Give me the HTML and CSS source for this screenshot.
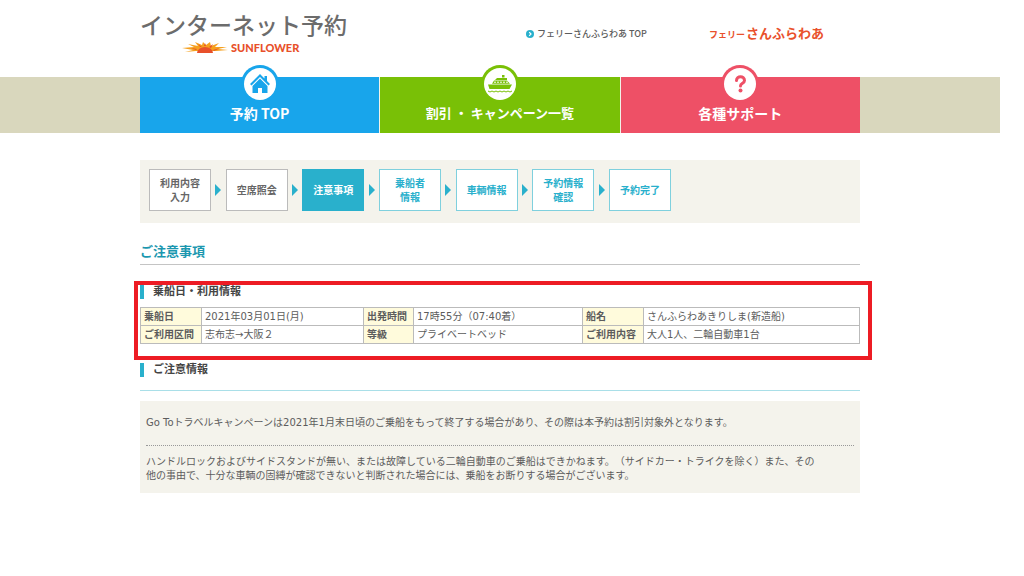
FILE: index.html
```html
<!DOCTYPE html>
<html lang="ja">
<head>
<meta charset="utf-8">
<meta name="viewport" content="width=device-width, initial-scale=1">
<title>インターネット予約</title>
<link rel="stylesheet" href="styles.css">
</head>
<body>
<header class="header container">
  <div class="brand">
    <h1 class="brand-title">インターネット予約</h1>
    <div class="brand-sub">
      <svg class="sun" viewBox="0 0 46 12" aria-hidden="true">
        <path fill="#f5a01e" d="M0 6l12-1-6-3 10 2-3-4 7 3 1-3 3 3 4-3 1 4 8-3-4 4 12 0-9 2 10 1-12 1H14L3 10l8-2z"/>
        <path fill="#e8502a" d="M15 11a8 6 0 0 1 16 0zM14 8l-5-2 6 1zM18 5l-2-3 4 3zM22 4l1-3 1 3zM27 5l4-3-2 4zM31 8l7-2-6 3z"/>
      </svg>
      <span>SUNFLOWER</span>
    </div>
  </div>
  <a class="top-link" href="#">
    <svg class="bullet" viewBox="0 0 8 8" aria-hidden="true"><circle cx="4" cy="4" r="4" fill="#29b0cc"/><path d="M3.2 2.2L5 4 3.2 5.8" fill="none" stroke="#fff" stroke-width="1.2"/></svg>
    <span>フェリーさんふらわあ TOP</span>
  </a>
  <a class="company" href="#"><span>フェリー</span><span class="company-name">さんふらわあ</span></a>
</header>

<div class="nav-band">
  <nav class="nav container">
    <a class="nav-item blue" href="#">
      <span class="nav-icon"><svg viewBox="0 0 32 32" aria-hidden="true"><path fill="#18a5eb" d="M16 6l4.500 4.500V8H23v5l3 3-1.500 1.500L16 9l-8.500 8.500L6 16z"/><path fill="#18a5eb" d="M16 10.500l7.500 7.500V25H18v-5h-4v5H8.500v-7z"/></svg></span>
      <span class="nav-label">予約 TOP</span>
    </a>
    <a class="nav-item green" href="#">
      <span class="nav-icon"><svg viewBox="0 0 32 32" aria-hidden="true"><g fill="#79c006"><path d="M4 16.500h24L25.500 21h-20zM8 15.700l2-3.200h13l3 3.200zM11 12l2-2h10v2zM18 9.500V7h2.500v2.500z"/></g><path fill="none" stroke="#fff" stroke-dasharray="2 1" d="M10 14.200h14"/><path fill="none" stroke="#79c006" d="M4 23q2 2 4 0q2 2 4 0q2 2 4 0q2 2 4 0q2 2 4 0q2 2 4 0"/></svg></span>
      <span class="nav-label compact">割引 ・ キャンペーン一覧</span>
    </a>
    <a class="nav-item pink" href="#">
      <span class="nav-icon"><svg viewBox="0 0 32 32" aria-hidden="true"><path fill="none" stroke="#ee5066" stroke-width="3" stroke-linecap="round" d="M12.500 12.500c0-5 8-5 8 0c0 3-4 2.500-4 5.500"/><circle cx="16.500" cy="22.500" r="2" fill="#ee5066"/></svg></span>
      <span class="nav-label">各種サポート</span>
    </a>
  </nav>
</div>

<main class="container">
  <div class="steps-panel">
    <ol class="steps">
      <li class="step past">利用内容<br>入力</li>
      <li class="arrow" aria-hidden="true"></li>
      <li class="step past">空席照会</li>
      <li class="arrow" aria-hidden="true"></li>
      <li class="step current">注意事項</li>
      <li class="arrow" aria-hidden="true"></li>
      <li class="step">乗船者<br>情報</li>
      <li class="arrow" aria-hidden="true"></li>
      <li class="step">車輌情報</li>
      <li class="arrow" aria-hidden="true"></li>
      <li class="step">予約情報<br>確認</li>
      <li class="arrow" aria-hidden="true"></li>
      <li class="step">予約完了</li>
    </ol>
  </div>

  <h2 class="page-title">ご注意事項</h2>

  <section class="booking">
    <h3 class="section-title">乗船日・利用情報</h3>
    <table class="info">
      <colgroup><col class="c-label"><col class="c-date"><col class="c-short"><col class="c-time"><col class="c-label"><col></colgroup>
      <tr><th scope="row">乗船日</th><td>2021年03月01日(月)</td><th scope="row">出発時間</th><td>17時55分（07:40着）</td><th scope="row">船名</th><td>さんふらわあきりしま(新造船)</td></tr>
      <tr><th scope="row">ご利用区間</th><td>志布志→大阪２</td><th scope="row">等級</th><td>プライベートベッド</td><th scope="row">ご利用内容</th><td>大人1人、二輪自動車1台</td></tr>
    </table>
  </section>

  <section class="notice">
    <div class="notice-header">
      <h3 class="section-title">ご注意情報</h3>
    </div>
    <div class="notes">
      <p>Go Toトラベルキャンペーンは2021年1月末日頃のご乗船をもって終了する場合があり、その際は本予約は割引対象外となります。</p>
      <p>ハンドルロックおよびサイドスタンドが無い、または故障している二輪自動車のご乗船はできかねます。（サイドカー・トライクを除く）また、その<br>他の事由で、十分な車輌の固縛が確認できないと判断された場合には、乗船をお断りする場合がございます。</p>
    </div>
  </section>
</main>
</body>
</html>
```
FILE: styles.css
```css
* { box-sizing: border-box; }

body {
  margin: 0;
  padding-right: 24px;
  background: #fff;
  color: #5c5c5c;
  font: 10px/14px "DejaVu Sans", "Noto Sans CJK JP", sans-serif;
  text-spacing-trim: space-all;
}

h1, h2, h3, p, ol { margin: 0; padding: 0; }
a { color: inherit; text-decoration: none; }
svg { display: block; }

.container {
  max-width: 720px;
  margin: 0 auto;
}

.header {
  display: flex;
  align-items: flex-start;
  min-height: 77px;
  padding-top: 8px;
  font-family: "Noto Sans CJK JP", sans-serif;
}

.brand { flex: 0 0 386px; }

.brand-title {
  font-size: 23px;
  line-height: 32px;
  font-weight: 500;
  color: #6c6c6c;
}

.brand-sub {
  display: flex;
  align-items: center;
  gap: 3px;
  margin-top: 2px;
  padding-left: 42px;
  color: #e8502a;
  font: 900 11px/12px Lato, sans-serif;
}

.sun { width: 46px; height: 12px; }

.top-link {
  display: flex;
  align-items: center;
  gap: 3px;
  flex: 0 0 183px;
  padding-top: 19px;
  font-size: 9px;
  font-weight: 500;
  line-height: 14px;
}

.bullet { width: 8px; height: 8px; }

.company {
  display: flex;
  align-items: baseline;
  gap: 1px;
  padding-top: 16px;
  color: #e9512c;
  font-size: 9px;
  font-weight: bold;
  line-height: 18px;
  white-space: nowrap;
}

.company-name { font-size: 13px; }

.nav-band { background: #d9d7bd; }

.nav {
  display: grid;
  grid-template-columns: repeat(3, 1fr);
  gap: 1px;
  background: #f2f2e8;
}

.nav-item {
  display: flex;
  flex-direction: column;
  align-items: center;
  min-height: 56px;
  color: #fff;
}

.blue { background: #18a5eb; }
.green { background: #79c006; }
.pink { background: #ee5066; }

.nav-icon {
  margin-top: -12px;
  padding: 3px;
  border-radius: 50%;
  background: inherit;
}

.nav-icon svg {
  width: 32px;
  height: 32px;
  border-radius: 50%;
  background: #fff;
}

.nav-label {
  margin-top: 1px;
  font: bold 14px/18px "Noto Sans CJK JP", sans-serif;
}

.nav-label.compact { font-size: 13px; }

.steps-panel {
  margin-top: 27px;
  padding: 9px 9px 12px;
  background: #f4f3ec;
}

.steps {
  display: flex;
  align-items: center;
  justify-content: space-between;
  max-width: 522px;
  list-style: none;
  font-weight: bold;
  text-align: center;
}

.step {
  display: flex;
  align-items: center;
  justify-content: center;
  width: 62px;
  min-height: 42px;
  padding-top: 2px;
  border: 1px solid #7fd0de;
  background: #fff;
  color: #29b0cc;
}

.past { border-color: #bbb; color: #666; }
.current { border-color: #29b0cc; background: #29b0cc; color: #fff; }

.arrow {
  border: solid transparent;
  border-width: 6px 0 6px 6px;
  border-left-color: #29b0cc;
}

.page-title {
  margin-top: 19px;
  padding-bottom: 2px;
  border-bottom: 1px solid #c4c4c4;
  color: #1b97af;
  font-size: 13px;
  line-height: 20px;
}

.section-title {
  padding-left: 9px;
  border-left: 4px solid #29b0cc;
  color: #444;
  font-size: 11px;
  line-height: 14px;
}

.booking {
  position: relative;
  margin-top: 20px;
}

/* highlight frame laid over the booking details */
.booking::after {
  content: "";
  position: absolute;
  inset: -4px -12px -16px -6px;
  border: 4px solid #ed1c24;
  pointer-events: none;
}

.info {
  width: 100%;
  margin-top: 8px;
  border-collapse: collapse;
  table-layout: fixed;
}

.c-label { width: 61px; }
.c-date { width: 162px; }
.c-short { width: 50px; }
.c-time { width: 169px; }

.info th, .info td {
  height: 18px;
  padding: 0 3px;
  border: 1px solid #bbb;
  line-height: 17px;
  text-align: left;
  white-space: nowrap;
}

.info th { background: #fffbdc; }

.notice { margin-top: 19px; }

.notice-header {
  padding-bottom: 13px;
  border-bottom: 1px solid #a9dfe8;
}

.notes {
  margin-top: 10px;
  padding: 15px 6px 10px;
  background: #f4f3ec;
}

.notes p:first-child { padding-bottom: 15px; }

.notes p + p {
  padding-top: 9px;
  border-top: 1px dotted #999;
}
```
